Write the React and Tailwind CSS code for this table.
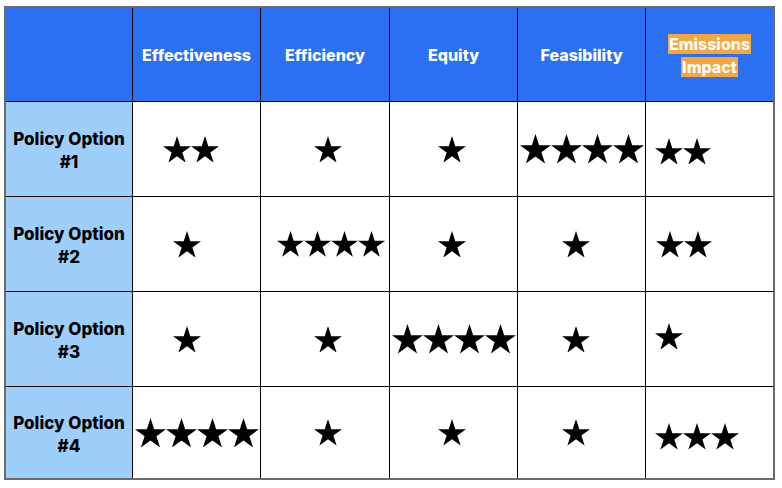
import React from "react";

const Star = ({ w = 28 }) => (
  <svg width={w} height={w * 0.951} viewBox="-95.1 -100 190.2 181" className="block shrink-0">
    <polygon
      fill="#000"
      points="0,-100 22.45,-30.9 95.1,-30.9 36.33,11.8 58.8,80.9 0,38.2 -58.8,80.9 -36.33,11.8 -95.1,-30.9 -22.45,-30.9"
    />
  </svg>
);

const Stars = ({ n, cls, w }) => {
  const size = w || (n === 4 ? 31 : 28);
  return (
    <div className={`flex h-full w-full items-center ${cls}`}>
      {Array.from({ length: n }).map((_, i) => (
        <Star key={i} w={size} />
      ))}
    </div>
  );
};

const data = [
  [
    [2, "justify-center pr-[12px]"],
    [1, "justify-center pl-[6px]"],
    [1, "justify-center pr-[4px]"],
    [4, "justify-center"],
    [2, "justify-start pl-[9px] pt-[4px]"],
  ],
  [
    [1, "justify-center pr-[20px]"],
    [4, "justify-center pl-[12px]", 27],
    [1, "justify-center pr-[4px]"],
    [1, "justify-center pr-[12px]"],
    [2, "justify-start pl-[10px]"],
  ],
  [
    [1, "justify-center pr-[20px]"],
    [1, "justify-center pl-[6px]"],
    [4, "justify-center"],
    [1, "justify-center pr-[12px]"],
    [1, "justify-start pl-[9px] pb-[6px]"],
  ],
  [
    [4, "justify-center"],
    [1, "justify-center pl-[6px]"],
    [1, "justify-center pr-[4px]"],
    [1, "justify-center pr-[12px]"],
    [3, "justify-start pl-[9px] pt-[8px]"],
  ],
];

const headers = ["Effectiveness", "Efficiency", "Equity", "Feasibility"];

export default function App() {
  return (
    <div className="w-[782px] h-[488px] bg-white pl-[4px] pt-[6px]" style={{ fontFamily: "Inter, 'Liberation Sans', sans-serif" }}>
      <div className="w-[771px] h-[474px] border-2 border-[#6b6b6b] bg-black grid gap-px grid-cols-[126px_127px_128px_127px_127px_1fr] grid-rows-[93px_94px_94px_94px_1fr]">
        <div className="bg-[#2b6ff3]" />
        {headers.map((h) => (
          <div key={h} className="bg-[#2b6ff3] flex items-center justify-center text-white font-extrabold text-[16px]">
            {h}
          </div>
        ))}
        <div className="bg-[#2b6ff3] flex items-center justify-center text-white font-extrabold text-[16px] leading-[23px] text-center pt-[2px]">
          <div>
            <span className="bg-[#f4a63f] px-[1px]">Emissions</span>
            <br />
            <span className="bg-[#f4a63f] px-[1px]">Impact</span>
          </div>
        </div>
        {data.map((row, ri) => (
          <React.Fragment key={ri}>
            <div className="bg-[#9ecffb] flex items-center justify-center text-center text-black font-extrabold text-[17px] leading-[23px] pt-[4px]">
              <div>
                Policy Option
                <br />#{ri + 1}
              </div>
            </div>
            {row.map(([n, cls, w], ci) => (
              <div key={ci} className="bg-white">
                <Stars n={n} cls={cls} w={w} />
              </div>
            ))}
          </React.Fragment>
        ))}
      </div>
    </div>
  );
}
